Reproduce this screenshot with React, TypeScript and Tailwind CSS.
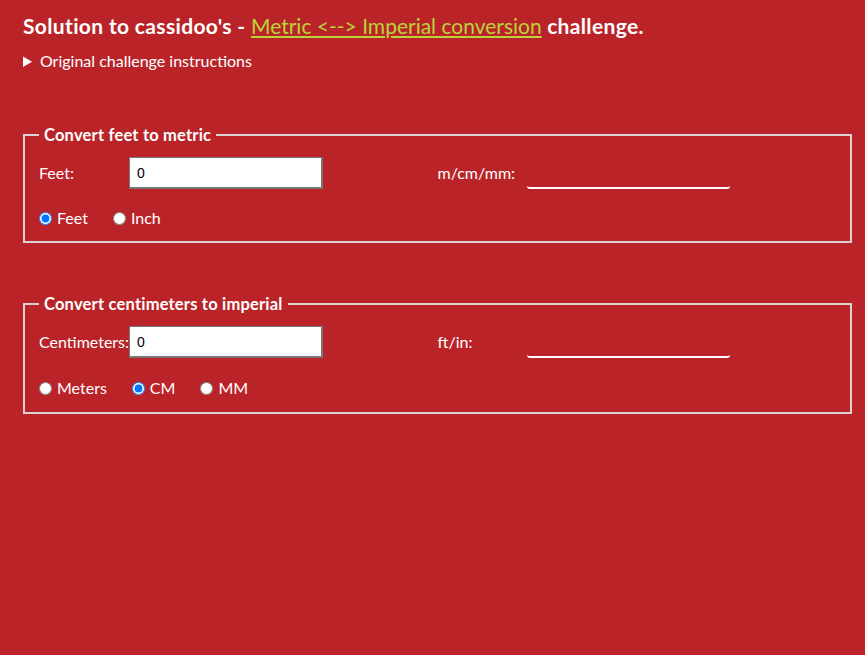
import { useState } from "react";

const font = "font-['Lato','Open_Sans',sans-serif]";

const Output = () => (
  <div className="w-[203px] h-[32px] border-b-2 border-white rounded-b-[3px]" />
);

const Radio = ({
  name,
  label,
  checked,
  onChange,
}: {
  name: string;
  label: string;
  checked: boolean;
  onChange: () => void;
}) => (
  <label className="flex items-center mr-[25px]">
    <input
      type="radio"
      name={name}
      checked={checked}
      onChange={onChange}
      className="m-0 w-[13px] h-[13px] mr-[5px]"
    />
    <span>{label}</span>
  </label>
);

const App = () => {
  const [feetUnit, setFeetUnit] = useState("feet");
  const [cmUnit, setCmUnit] = useState("cm");

  return (
    <div className={`min-h-screen bg-[#ba2428] text-white ${font} pt-[13px]`}>
      <h1 className="ml-[23px] text-[21px] font-bold leading-[26px] tracking-[0.35px]">
        Solution to cassidoo's -{" "}
        <a href="#" className="font-normal tracking-normal text-[#b9d43a] underline">
          Metric &lt;--&gt; Imperial conversion
        </a>{" "}
        challenge.
      </h1>

      <details className="ml-[23px] mt-[10px] text-[16px]">
        <summary className="cursor-pointer leading-[24px]">
          Original challenge instructions
        </summary>
      </details>

      <fieldset className="ml-[23px] mr-[13px] mt-[52px] border-2 border-[#dcd2d2] px-[14px] pt-[12px] pb-[13px]">
        <legend className="px-[5px] text-[16.5px] font-bold leading-[20px] tracking-[0.2px]">
          Convert feet to metric
        </legend>
        <div className="grid grid-cols-2 text-[16px]">
          <div className="flex items-center">
            <span className="w-[90px]">Feet:</span>
            <input
              type="text"
              defaultValue="0"
              className="w-[194px] h-[32px] bg-white text-black text-[14px] px-[7px] border border-[#777] border-r-2 border-b-2 font-['Liberation_Sans',sans-serif]"
            />
          </div>
          <div className="flex items-start">
            <span className="w-[89px] leading-[32px]">m/cm/mm:</span>
            <Output />
          </div>
        </div>
        <div className="flex items-center mt-[19px] text-[16px] leading-[20px]">
          <Radio
            name="f"
            label="Feet"
            checked={feetUnit === "feet"}
            onChange={() => setFeetUnit("feet")}
          />
          <Radio
            name="f"
            label="Inch"
            checked={feetUnit === "inch"}
            onChange={() => setFeetUnit("inch")}
          />
        </div>
      </fieldset>

      <fieldset className="ml-[23px] mr-[13px] mt-[51px] border-2 border-[#dcd2d2] px-[14px] pt-[12px] pb-[14px]">
        <legend className="px-[5px] text-[16.5px] font-bold leading-[20px] tracking-[0.2px]">
          Convert centimeters to imperial
        </legend>
        <div className="grid grid-cols-2 text-[16px]">
          <div className="flex items-center">
            <span className="w-[90px]">Centimeters:</span>
            <input
              type="text"
              defaultValue="0"
              className="w-[194px] h-[32px] bg-white text-black text-[14px] px-[7px] border border-[#777] border-r-2 border-b-2 font-['Liberation_Sans',sans-serif]"
            />
          </div>
          <div className="flex items-start">
            <span className="w-[89px] leading-[32px]">ft/in:</span>
            <Output />
          </div>
        </div>
        <div className="flex items-center mt-[20px] text-[16px] leading-[20px]">
          <Radio
            name="c"
            label="Meters"
            checked={cmUnit === "m"}
            onChange={() => setCmUnit("m")}
          />
          <Radio
            name="c"
            label="CM"
            checked={cmUnit === "cm"}
            onChange={() => setCmUnit("cm")}
          />
          <Radio
            name="c"
            label="MM"
            checked={cmUnit === "mm"}
            onChange={() => setCmUnit("mm")}
          />
        </div>
      </fieldset>
    </div>
  );
};

export default App;
